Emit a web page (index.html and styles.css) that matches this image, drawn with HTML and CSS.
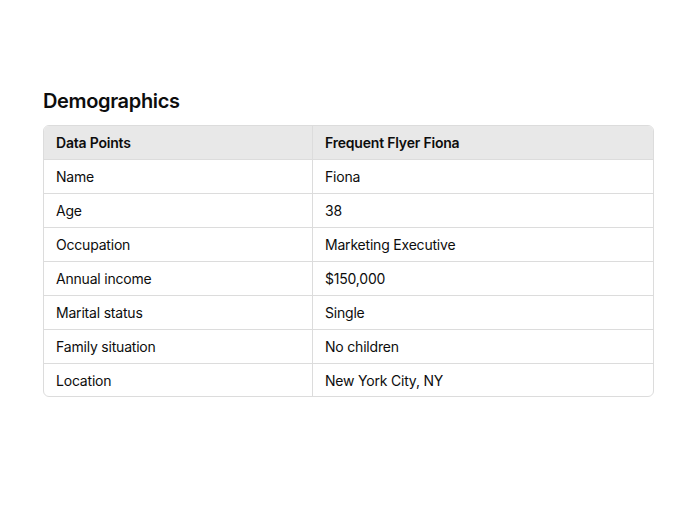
FILE: index.html
```html
<!DOCTYPE html>
<html>
<head>
<meta charset="utf-8">
<link rel="stylesheet" href="styles.css">
</head>
<body>
<main class="page">
  <h2 class="title">Demographics</h2>
  <div class="table-wrap">
    <table class="data">
      <thead>
        <tr><th class="c1">Data Points</th><th>Frequent Flyer Fiona</th></tr>
      </thead>
      <tbody>
        <tr><td class="c1">Name</td><td>Fiona</td></tr>
        <tr><td class="c1">Age</td><td>38</td></tr>
        <tr><td class="c1">Occupation</td><td>Marketing Executive</td></tr>
        <tr><td class="c1">Annual income</td><td>$150,000</td></tr>
        <tr><td class="c1">Marital status</td><td>Single</td></tr>
        <tr><td class="c1">Family situation</td><td>No children</td></tr>
        <tr><td class="c1">Location</td><td>New York City, NY</td></tr>
      </tbody>
    </table>
  </div>
</main>
</body>
</html>
```
FILE: styles.css
```css
html, body {
  margin: 0;
  padding: 0;
  background: #fff;
}
body {
  font-family: Inter, "Noto Sans", sans-serif;
  color: #0d0d0d;
}
.page {
  padding: 88px 46px 0 43px;
}
.title {
  margin: 0 0 11px 0;
  font-size: 20px;
  font-weight: 600;
  line-height: 26px;
  letter-spacing: -0.35px;
}
.table-wrap {
  border: 1px solid #dcdcdc;
  border-radius: 6px;
  overflow: hidden;
  width: 609px;
}
.data {
  width: 100%;
  border-collapse: collapse;
  font-size: 14px;
  letter-spacing: -0.2px;
}
.data th, .data td {
  height: 33px;
  padding: 0 12px;
  text-align: left;
  vertical-align: middle;
  border-bottom: 1px solid #dcdcdc;
}
.data tbody tr:last-child td {
  border-bottom: none;
  height: 32px;
}
.data th {
  background: #e8e8e8;
  font-weight: 600;
}
.data .c1 {
  width: 244px;
  border-right: 1px solid #dcdcdc;
}
```
